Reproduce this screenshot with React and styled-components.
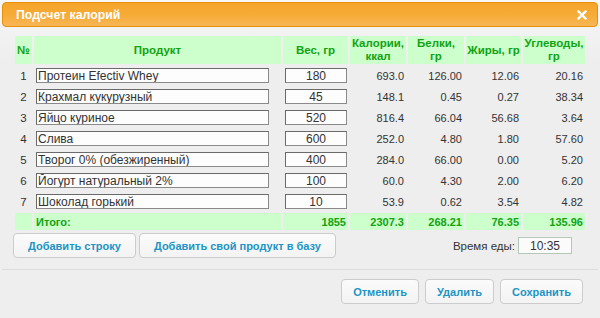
import React from 'react';
import styled, {createGlobalStyle} from 'styled-components';

const GlobalStyle = createGlobalStyle`
  html, body {
    margin: 0;
    padding: 0;
    background: #eeeeee;
  }
`;

const rows = [
  ['Протеин Efectiv Whey', '180', '693.0', '126.00', '12.06', '20.16'],
  ['Крахмал кукурузный', '45', '148.1', '0.45', '0.27', '38.34'],
  ['Яйцо куриное', '520', '816.4', '66.04', '56.68', '3.64'],
  ['Слива', '600', '252.0', '4.80', '1.80', '57.60'],
  ['Творог 0% (обезжиренный)', '400', '284.0', '66.00', '0.00', '5.20'],
  ['Йогурт натуральный 2%', '100', '60.0', '4.30', '2.00', '6.20'],
  ['Шоколад горький', '10', '53.9', '0.62', '3.54', '4.82'],
];

const totals = ['1855', '2307.3', '268.21', '76.35', '135.96'];

const App = () => {
  return (
    <>
      <GlobalStyle />
      <Dialog>
        <TitleBar>
          <Title>Подсчет калорий</Title>
          <Close>
            <svg width="10" height="10" viewBox="0 0 10 10">
              <path d="M1.5 1.5 L8.5 8.5 M8.5 1.5 L1.5 8.5" stroke="#fff" strokeWidth="2.4" strokeLinecap="square" />
            </svg>
          </Close>
        </TitleBar>

        <Content>
          <Grid>
            <Head>№</Head>
            <Head>Продукт</Head>
            <Head>Вес, гр</Head>
            <Head>Калории,<br />ккал</Head>
            <Head>Белки,<br />гр</Head>
            <Head>Жиры, гр</Head>
            <Head>Углеводы,<br />гр</Head>

            {rows.map((r, i) => (
              <React.Fragment key={i}>
                <Num>{i + 1}</Num>
                <Cell><ProductInput defaultValue={r[0]} /></Cell>
                <Cell><WeightInput defaultValue={r[1]} /></Cell>
                <Value>{r[2]}</Value>
                <Value>{r[3]}</Value>
                <Value>{r[4]}</Value>
                <Value>{r[5]}</Value>
              </React.Fragment>
            ))}

            <Total />
            <Total $left>Итого:</Total>
            {totals.map((t, i) => <Total key={i}>{t}</Total>)}
          </Grid>

          <ToolRow>
            <Buttons>
              <Button $pad={14}>Добавить строку</Button>
              <Button $pad={14}>Добавить свой продукт в базу</Button>
            </Buttons>
            <TimeBox>
              <span>Время еды:</span>
              <TimeInput defaultValue="10:35" />
            </TimeBox>
          </ToolRow>
        </Content>

        <ButtonPane>
          <Button>Отменить</Button>
          <Button>Удалить</Button>
          <Button>Сохранить</Button>
        </ButtonPane>
      </Dialog>
    </>
  );
};

export default App;

const Dialog = styled.div`
  width: 600px;
  height: 318px;
  box-sizing: border-box;
  padding: 2px;
  display: flex;
  flex-direction: column;
  background: linear-gradient(to bottom, #f7f7f7 0px, #eeeeee 60px);
  font-family: "Liberation Sans", Arial, sans-serif;
`;

const TitleBar = styled.div`
  height: 25px;
  box-sizing: border-box;
  border: 1px solid #e78f08;
  border-radius: 4px;
  background: linear-gradient(to bottom, #f5a52a 0%, #f6ab36 50%, #f8b656 100%);
  display: flex;
  align-items: center;
  justify-content: space-between;
  padding: 0 10px 0 13px;
`;

const Title = styled.span`
  color: #ffffff;
  font-weight: bold;
  font-size: 12.3px;
`;

const Close = styled.span`
  display: flex;
  align-items: center;
`;

const Content = styled.div`
  flex: 1;
  padding: 7px 11px 0 11px;
`;

const Grid = styled.div`
  display: grid;
  grid-template-columns: 17px 247px 65px 56px 56px 55px 62px;
  grid-template-rows: 28px repeat(7, 19px) 17px;
  gap: 2px;
  padding: 2px;
`;

const Head = styled.div`
  background: #ccffcc;
  color: #12a312;
  font-weight: bold;
  font-size: 11.5px;
  line-height: 13px;
  white-space: nowrap;
  display: flex;
  align-items: center;
  justify-content: center;
  text-align: center;
`;

const Cell = styled.div`
  display: flex;
  align-items: center;
  padding-left: 2px;
`;

const Num = styled.div`
  display: flex;
  align-items: center;
  justify-content: center;
  color: #333333;
  font-size: 11.5px;
`;

const Value = styled.div`
  display: flex;
  align-items: center;
  justify-content: flex-end;
  padding-right: 2px;
  color: #333333;
  font-size: 11px;
`;

const Total = styled.div`
  background: #ccffcc;
  color: #12a312;
  font-weight: bold;
  font-size: 11px;
  display: flex;
  align-items: center;
  justify-content: ${p => (p.$left ? 'flex-start' : 'flex-end')};
  padding: ${p => (p.$left ? '0 0 0 2px' : '0 2px 0 0')};
`;

const BaseInput = styled.input`
  box-sizing: border-box;
  height: 15px;
  border: 1px solid #8a8a8a;
  border-top-color: #6a6a6a;
  border-left-color: #6a6a6a;
  background: #fdfdfd;
  color: #333333;
  font-family: "Liberation Sans", Arial, sans-serif;
  font-size: 12px;
  padding: 0 1px;
  margin: 0;
  outline: none;
`;

const ProductInput = styled(BaseInput)`
  width: 233px;
`;

const WeightInput = styled(BaseInput)`
  width: 62px;
  text-align: center;
`;

const ToolRow = styled.div`
  display: flex;
  align-items: center;
  justify-content: space-between;
  padding-right: 15px;
  margin-top: 1px;
`;

const Buttons = styled.div`
  display: flex;
  gap: 3px;
`;

const Button = styled.button`
  height: 25px;
  box-sizing: border-box;
  padding: 0 ${p => p.$pad || 11}px;
  border: 1px solid #cccccc;
  border-radius: 4px;
  background: linear-gradient(to bottom, #fbfbfb, #f3f3f3);
  color: #1c94c4;
  font-family: "Liberation Sans", Arial, sans-serif;
  font-weight: bold;
  font-size: 11px;
  cursor: pointer;
`;

const TimeBox = styled.div`
  display: flex;
  align-items: center;
  gap: 3px;
  color: #333333;
  font-size: 11.5px;
`;

const TimeInput = styled.input`
  box-sizing: border-box;
  width: 54px;
  height: 17px;
  border: 1px solid #b7c7b7;
  background: #fbfbfb;
  color: #333333;
  font-family: "Liberation Sans", Arial, sans-serif;
  font-size: 12px;
  text-align: center;
  padding: 0;
  outline: none;
`;

const ButtonPane = styled.div`
  border-top: 1px solid #dddddd;
  padding: 9px 15px 12px 0;
  display: flex;
  justify-content: flex-end;
  gap: 6px;
`;
